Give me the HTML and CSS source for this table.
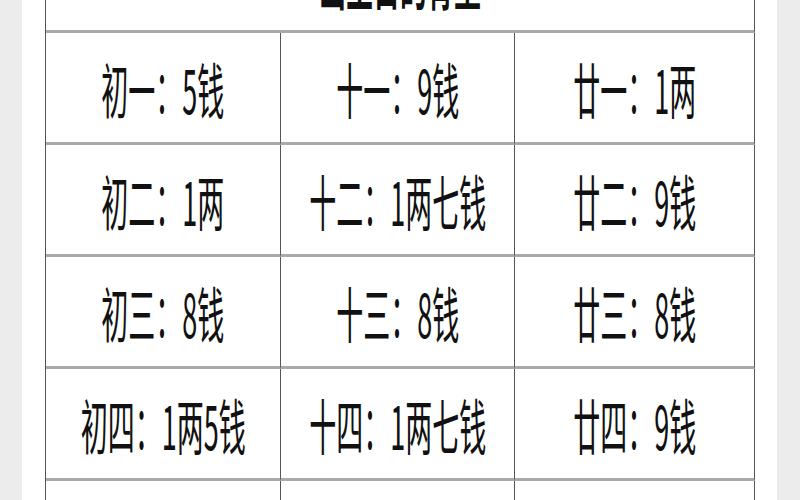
FILE: index.html
```html
<!DOCTYPE html>
<html lang="zh">
<head>
<meta charset="utf-8">
<title>骨重表</title>
<link rel="stylesheet" href="styles.css">
</head>
<body>
<div class="panel">
  <div class="table">
    <div class="title"><span class="t tb">出生日的骨重</span></div>
    <div class="cell"><span class="t">初一：5钱</span></div>
    <div class="cell"><span class="t">十一：9钱</span></div>
    <div class="cell"><span class="t">廿一：1两</span></div>
    <div class="cell"><span class="t">初二：1两</span></div>
    <div class="cell"><span class="t">十二：1两七钱</span></div>
    <div class="cell"><span class="t">廿二：9钱</span></div>
    <div class="cell"><span class="t">初三：8钱</span></div>
    <div class="cell"><span class="t">十三：8钱</span></div>
    <div class="cell"><span class="t">廿三：8钱</span></div>
    <div class="cell"><span class="t">初四：1两5钱</span></div>
    <div class="cell"><span class="t">十四：1两七钱</span></div>
    <div class="cell"><span class="t">廿四：9钱</span></div>
    <div class="cell"></div>
    <div class="cell"></div>
    <div class="cell"></div>
  </div>
</div>
</body>
</html>
```
FILE: styles.css
```css
html, body {
  margin: 0;
  padding: 0;
  height: 100%;
  overflow: hidden;
}
body {
  background: #ececec;
  font-family: "Noto Sans CJK SC", "Noto Sans", sans-serif;
  color: #111;
}
.panel {
  background: #fff;
  margin: 0 23px 0 22px;
  padding: 0 22px 0 23px;
  height: 100%;
  display: flow-root;
}
.table {
  margin-top: -79px;
  display: grid;
  grid-template-columns: 235px 234px 240px;
  border-left: 1px solid #555;
}
.title {
  grid-column: 1 / 4;
  height: 109px;
  border-bottom: 3px solid #a9a9a9;
  border-right: 1px solid #555;
  display: flex;
  align-items: flex-end;
  justify-content: center;
  overflow: hidden;
}
.cell {
  height: 109px;
  border-bottom: 3px solid #a9a9a9;
  border-right: 1px solid #555;
  display: flex;
  align-items: center;
  justify-content: center;
  white-space: nowrap;
}
.t {
  display: inline-block;
  font-size: 60px;
  line-height: 1;
  transform: scaleX(0.45);
  white-space: nowrap;
}
.tb {
  font-weight: 700;
  margin-bottom: 21px;
}
```
